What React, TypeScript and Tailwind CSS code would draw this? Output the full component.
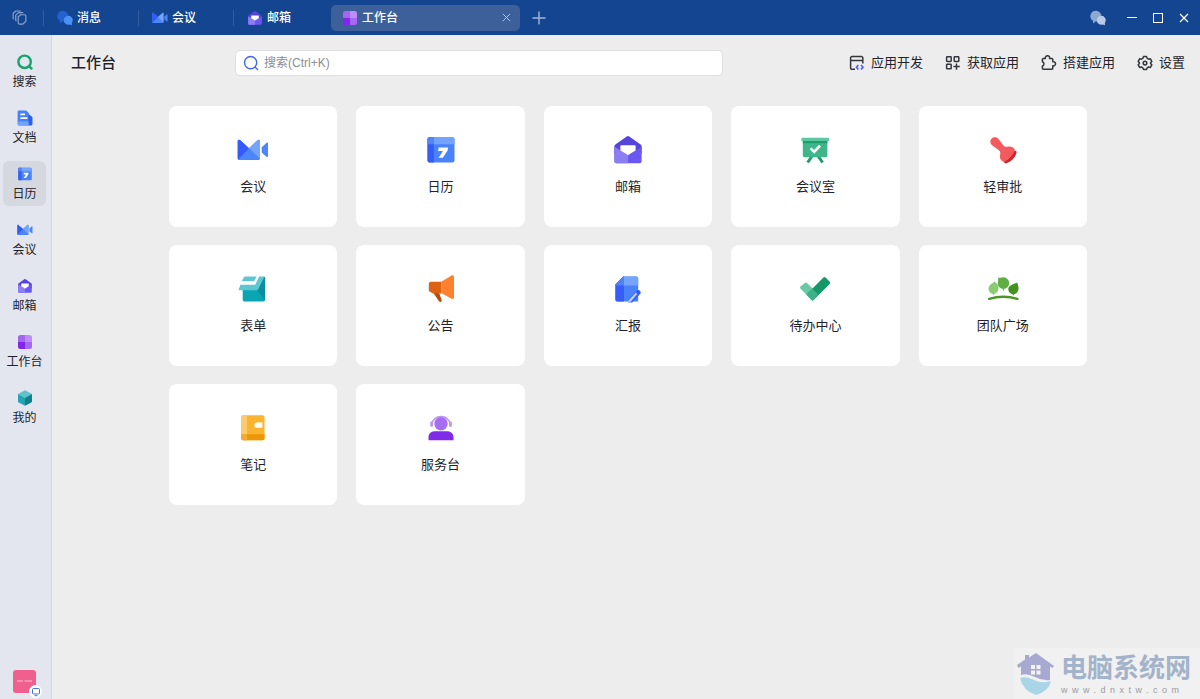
import { useState, type ReactNode } from 'react';
import { clsx } from 'clsx';

interface IconProps {
  className?: string;
}

interface Item {
  name: string;
  icon: (props: IconProps) => ReactNode;
}

/* ---------- App icons (32 x 32 grid) ---------- */

function MeetingIcon({ className }: IconProps) {
  return (
    <svg viewBox="0 0 32 32" className={className} aria-hidden="true">
      <path d="M.7 7.2C.7 5.7 2.2 5.2 3.4 6.3L12 14.2 20.3 6.3C21.5 5.2 23 5.7 23 7.2V24.4A1.6 1.6 0 0 1 21.4 26H2.3A1.6 1.6 0 0 1 .7 24.4Z" fill="#4d86fb" />
      <path d="M.7 7.2C.7 5.7 2.2 5.2 3.4 6.3L12 14.2 1.2 25.4.7 24.4Z" fill="#345bfa" />
      <path d="M12 14.2 20.3 6.3C21.5 5.2 23 5.7 23 7.2V24.6Z" fill="#75a4fc" />
      <path d="M24.7 13.2 29.4 9C30.2 8.3 31 8.6 31 9.6V22C31 23 30.2 23.4 29.4 22.7L24.7 18.6Z" fill="#4d86fb" />
    </svg>
  );
}

function CalendarIcon({ className }: IconProps) {
  return (
    <svg viewBox="0 0 32 32" className={className} aria-hidden="true">
      <rect x="2.5" y="3.3" width="27" height="25.2" rx="2" fill="#4a82fa" />
      <path d="M4.5 3.3H9V28.5H4.5A2 2 0 0 1 2.5 26.5V5.3A2 2 0 0 1 4.5 3.3Z" fill="#355df9" />
      <path d="M9 3.3H27.5A2 2 0 0 1 29.5 5.3V10.3H9Z" fill="#73a3fb" />
      <path d="M4.5 3.3H9V10.3H2.5V5.3A2 2 0 0 1 4.5 3.3Z" fill="#5484fa" />
      <path d="M13.8 13.6H23.2L22.6 16.4 17.8 23.8H13.6L18 17H13Z" fill="#fff" />
    </svg>
  );
}

function MailIcon({ className }: IconProps) {
  return (
    <svg viewBox="0 0 32 32" className={className} aria-hidden="true">
      <path d="M14.7 2.5A2.2 2.2 0 0 1 17.3 2.5L28.6 10.4A2.4 2.4 0 0 1 29.6 12.3V20H2.4V12.3A2.4 2.4 0 0 1 3.4 10.4Z" fill="#5645dc" />
      <path d="M2.4 12.8 16 21 29.6 12.8V27.3A2 2 0 0 1 27.6 29.3H4.4A2 2 0 0 1 2.4 27.3Z" fill="#6b57f2" />
      <path d="M2.4 12.8 16 21V29.3H4.4A2 2 0 0 1 2.4 27.3Z" fill="#8c7ef0" />
      <path d="M9.4 11.2H22.6A1 1 0 0 1 23.6 12.2V16.4L16 21 8.4 16.4V12.2A1 1 0 0 1 9.4 11.2Z" fill="#fff" />
    </svg>
  );
}

function RoomIcon({ className }: IconProps) {
  return (
    <svg viewBox="0 0 32 32" className={className} aria-hidden="true">
      <path d="M13.5 21.5 8.6 28.5M18.7 21.5 23.6 28.5" stroke="#1b9d6c" strokeWidth="3" fill="none" />
      <path d="M3.8 7H28.4V21.4A1.8 1.8 0 0 1 26.6 23.2H5.6A1.8 1.8 0 0 1 3.8 21.4Z" fill="#3fb68a" />
      <path d="M3.8 6.5H28.4V9.2H3.8Z" fill="#1b9d6c" />
      <rect x="2.4" y="3.8" width="27.6" height="3.2" rx=".6" fill="#5cc8a1" />
      <path d="M11.6 14.4 15.2 17.8 21 11.6" stroke="#fff" strokeWidth="2.6" fill="none" />
    </svg>
  );
}

function StampIcon({ className }: IconProps) {
  return (
    <svg viewBox="0 0 32 32" className={className} aria-hidden="true">
      <path d="M27.6 16.6C29 16.4 29.8 17.4 29.5 18.8 28.3 23.6 24 28 19.4 29.3 17.8 29.7 16.8 28.8 17.1 27.3Z" fill="#c9282f" />
      <path d="M4.6 4.6C6.7 2.5 9.8 2.7 11.6 5L16.4 11.5C17.6 13 19.2 12.9 21 12.6 24 12.1 26.3 13 27.9 15.4 26.9 20 22 26.2 16.6 27.7 13.3 26.5 12.4 23.4 13.2 20.4 13.7 18.6 13.2 17.2 11.6 15.9L5 11.2C2.9 9.6 2.8 6.4 4.6 4.6Z" fill="#f35a5e" />
    </svg>
  );
}

function FormIcon({ className }: IconProps) {
  return (
    <svg viewBox="0 0 32 32" className={className} aria-hidden="true">
      <path d="M5.7 16H28V26.8A1.8 1.8 0 0 1 26.2 28.6H7.5A1.8 1.8 0 0 1 5.7 26.8Z" fill="#0aa5b2" />
      <path d="M26.4 3.5A1.8 1.8 0 0 1 28.2 5.3V28L20.4 17.2Z" fill="#0b8f9e" />
      <path d="M8.6 3.5H19.6L17.2 8.1H4.8L6.8 4.4A2 2 0 0 1 8.6 3.5Z" fill="#5cc7d3" />
      <path d="M22.2 3.5H27.6L21.2 16A2.2 2.2 0 0 1 19.3 17.2H1.5L3.4 11.8H18.2Z" fill="#5cc7d3" />
    </svg>
  );
}

function NoticeIcon({ className }: IconProps) {
  return (
    <svg viewBox="0 0 32 32" className={className} aria-hidden="true">
      <path d="M7 18H13.4L16.6 26.8C17.2 28.9 15.4 29.8 14 28.3Z" fill="#b84c0c" />
      <path d="M5.8 8.8H16.4V20.4H8.2L4.5 18.6A2 2 0 0 1 3.8 17V10.8A2 2 0 0 1 5.8 8.8Z" fill="#dd6213" />
      <path d="M16.2 8.8 26.2 2.7C27.7 1.9 29 2.6 29 4.2V24C29 25.6 27.7 26.4 26.2 25.6L16.2 20Z" fill="#ff812d" />
    </svg>
  );
}

function ReportIcon({ className }: IconProps) {
  return (
    <svg viewBox="0 0 32 32" className={className} aria-hidden="true">
      <path d="M11.2 3.5H24.3A1.9 1.9 0 0 1 26.2 5.4V28.5H5.3A1.9 1.9 0 0 1 3.4 26.6V11.6Z" fill="#4a82fa" />
      <path d="M12 3.5V28.5H5.3A1.9 1.9 0 0 1 3.4 26.6V11.6L11.2 3.5Z" fill="#355df9" />
      <path d="M11.2 3.5H12V12.4H3.4V11.6Z" fill="#4f82fa" />
      <path d="M12 3.5H24.3A1.9 1.9 0 0 1 26.2 5.4V12.4H12Z" fill="#75a4fc" />
      <path d="M16.6 26.2 25.6 17 29 20 20.2 29.6H16.2Z" fill="#355df9" />
      <path d="M16.4 29.4V27.4L23.8 19.6 25.4 21 18 29.4Z" fill="#b3cdfd" />
      <path d="M25.2 17.8 26.4 17C27 16.7 28.8 18.2 28.6 19L27.6 20.6Z" fill="#355df9" />
    </svg>
  );
}

function TodoIcon({ className }: IconProps) {
  return (
    <svg viewBox="0 0 32 32" className={className} aria-hidden="true">
      <path d="M5.8 9.9A1.6 1.6 0 0 1 8 9.9L18.8 20.6 14.8 26.8A1.7 1.7 0 0 1 12.4 26.8L1.4 15.6A1.6 1.6 0 0 1 1.4 13.6Z" fill="#69caa8" />
      <path d="M24.4 4.6A1.6 1.6 0 0 1 26.6 4.6L30.7 8.8A1.6 1.6 0 0 1 30.7 11L14.8 26.8A1.7 1.7 0 0 1 12.4 26.8L7.8 21.2Z" fill="#149867" />
      <path d="M13.2 15.6 18.9 21.3 14.8 26.8A1.7 1.7 0 0 1 12.4 26.8L7.4 21.6Z" fill="#3fb188" />
    </svg>
  );
}

function TeamIcon({ className }: IconProps) {
  return (
    <svg viewBox="0 0 32 32" className={className} aria-hidden="true">
      <path d="M7.4 8.6C10.4 10.4 12 13 11.5 16 11 18.8 9.3 20.2 7.2 20.9L6.6 22.6 5.8 20.9C3.2 20.2 1.3 18 1.5 15.4 1.8 12.2 4.8 11 7.4 8.6Z" fill="#8bcb72" />
      <path d="M11.2 4.4C14.2 5.4 16 3.6 18.6 4.8 21.4 6 22.6 8.6 22 11.4 21.4 14 19.4 15.4 17.2 15.8L16.4 18.2 15.6 15.8C12.8 15.2 10.8 13.2 10.8 10.4 10.8 8.2 11.6 6.6 11.2 4.4Z" fill="#5fae43" />
      <path d="M30.2 9.4C30.8 12 32 13.6 31.4 16.6 30.8 19.4 29 20.6 27 21.2L26.4 22.8 25.6 21.2C23 20.6 21.2 18.8 21.3 16 21.4 12.4 25.6 11.2 30.2 9.4Z" fill="#43911f" />
      <path d="M2.2 25.8Q16.3 21.8 30.4 25.8" stroke="#4c9626" strokeWidth="2.4" strokeLinecap="round" fill="none" />
    </svg>
  );
}

function NoteIcon({ className }: IconProps) {
  return (
    <svg viewBox="0 0 32 32" className={className} aria-hidden="true">
      <rect x="4.3" y="3.3" width="23.2" height="25" rx="2" fill="#fbb42f" />
      <path d="M4.3 22.2H27.5V26.3A2 2 0 0 1 25.5 28.3H6.3A2 2 0 0 1 4.3 26.3Z" fill="#ec9706" />
      <path d="M6.3 3.3H10V22.2H4.3V5.3A2 2 0 0 1 6.3 3.3Z" fill="#fbca6c" />
      <path d="M4.3 22.2H10V28.3H6.3A2 2 0 0 1 4.3 26.3Z" fill="#f3aa30" />
      <path d="M20 10.6H25.4V15.8H20A2.6 2.6 0 0 1 20 10.6Z" fill="#fff" />
    </svg>
  );
}

function ServiceIcon({ className }: IconProps) {
  return (
    <svg viewBox="0 0 32 32" className={className} aria-hidden="true">
      <path d="M6.8 12.4A9.3 9.3 0 0 1 25.2 12.4" stroke="#bd93f4" strokeWidth="1.6" fill="none" />
      <rect x="5.2" y="9.4" width="2.8" height="5.4" rx="1.2" fill="#bd93f4" />
      <rect x="24" y="9.4" width="2.8" height="5.4" rx="1.2" fill="#bd93f4" />
      <circle cx="16" cy="11.8" r="6.7" fill="#a66df2" />
      <path d="M9.1 19.3H22.9A5.6 5.6 0 0 1 28.5 24.9V28.3H3.5V24.9A5.6 5.6 0 0 1 9.1 19.3Z" fill="#7f2be8" />
    </svg>
  );
}

/* ---------- Navigation icons (16 x 16 grid) ---------- */

function SearchIcon({ className }: IconProps) {
  return (
    <svg viewBox="0 0 16 16" className={className} fill="none" stroke="currentColor" aria-hidden="true">
      <circle cx="7.6" cy="7.6" r="6.1" />
      <path d="M11.8 11.8 15 15" />
    </svg>
  );
}

function SideSearchIcon({ className }: IconProps) {
  return (
    <svg viewBox="0 0 16 16" className={className} fill="none" stroke="#16a36c" strokeWidth="2.4" aria-hidden="true">
      <circle cx="7.6" cy="7.8" r="6.2" />
      <path d="M11.6 11.8 15.2 15.2" />
    </svg>
  );
}

function DocIcon({ className }: IconProps) {
  return (
    <svg viewBox="0 0 16 16" className={className} aria-hidden="true">
      <path d="M2 .5H9.2L12 3.2V15.5H2A1.4 1.4 0 0 1 .6 14.1V1.9A1.4 1.4 0 0 1 2 .5Z" fill="#4583f8" />
      <path d="M12 4.6 14.8 6.6A1.6 1.6 0 0 1 15.5 8V14A1.5 1.5 0 0 1 14 15.5H11.4V6Z" fill="#2f5fe8" />
      <path d="M.6 11.4H11.6V15.5H2A1.4 1.4 0 0 1 .6 14.1Z" fill="#72a4fb" />
      <path d="M3.4 4.4H8M3.4 8.2H10.4" stroke="#fff" strokeWidth="1.7" />
    </svg>
  );
}

function BenchIcon({ className }: IconProps) {
  return (
    <svg viewBox="0 0 16 16" className={className} aria-hidden="true">
      <path d="M3.5 1H8V8H1V3.5A2.5 2.5 0 0 1 3.5 1Z" fill="#a565ee" />
      <path d="M8 1H12.5A2.5 2.5 0 0 1 15 3.5V8H8Z" fill="#bd8df5" />
      <path d="M1 8H8V15H3.5A2.5 2.5 0 0 1 1 12.5Z" fill="#8226ee" />
      <path d="M8 8H15V12.5A2.5 2.5 0 0 1 12.5 15H8Z" fill="#a468f2" />
    </svg>
  );
}

function CubeIcon({ className }: IconProps) {
  return (
    <svg viewBox="0 0 16 16" className={className} aria-hidden="true">
      <path d="M8 .2 15 4 8 7.8 1 4Z" fill="#5cc3cc" />
      <path d="M1 4 8 7.8V15.8L1.7 12.4A1.2 1.2 0 0 1 1 11.3Z" fill="#23a5b0" />
      <path d="M15 4 8 7.8V15.8L14.3 12.4A1.2 1.2 0 0 0 15 11.3Z" fill="#0f7f8c" />
    </svg>
  );
}

function BubblesIcon({ className, back, front }: IconProps & { back: string; front: string }) {
  return (
    <svg viewBox="0 0 16 16" className={className} aria-hidden="true">
      <path d="M6 .8A5.6 5.4 0 1 1 5.6 11.6L3 13.4 3 10.8A5.6 5.4 0 0 1 6 .8Z" fill={back} />
      <path d="M11.2 5.8A4.5 4.5 0 0 1 14.8 13L15 15.2 12.6 14.6A4.5 4.5 0 1 1 11.2 5.8Z" fill={front} />
    </svg>
  );
}

function MessageIcon({ className }: IconProps) {
  return <BubblesIcon className={className} back="#2460cf" front="#4a90f7" />;
}

function StackIcon({ className }: IconProps) {
  return (
    <svg viewBox="0 0 16 16" className={className} fill="none" stroke="currentColor" strokeWidth="1.2" strokeLinejoin="round" aria-hidden="true">
      <path d="M6.6 7.2 9.4 5H13.4A1.4 1.4 0 0 1 14.8 6.4V12L11.6 15H8A1.4 1.4 0 0 1 6.6 13.6Z" />
      <path d="M4.6 12 4 10.8V5.4L7 2.8H12M1.8 9.8 1.2 8.8V3.4L4.2 1H9.4" />
    </svg>
  );
}

function DevIcon({ className }: IconProps) {
  return (
    <svg viewBox="0 0 16 16" className={className} fill="none" aria-hidden="true">
      <path d="M6 14.3H3A1.4 1.4 0 0 1 1.6 12.9V3A1.4 1.4 0 0 1 3 1.6H12.4A1.4 1.4 0 0 1 13.8 3V8.4M1.6 5.4H13.8" stroke="#33363b" strokeWidth="1.5" />
      <path d="M9.4 10 7.4 12.2 9.4 14.4M12 10 14 12.2 12 14.4" stroke="#4b5df5" strokeWidth="1.6" />
    </svg>
  );
}

function GetAppIcon({ className }: IconProps) {
  return (
    <svg viewBox="0 0 16 16" className={className} fill="none" stroke="#33363b" strokeWidth="1.5" aria-hidden="true">
      <rect x="1.6" y="1.8" width="4.6" height="4.6" rx=".6" />
      <rect x="9.2" y="1.8" width="4.6" height="4.6" rx=".6" />
      <rect x="1.6" y="9.2" width="4.6" height="4.6" rx=".6" />
      <path d="M11.5 8.4V14.8M8.4 11.5H14.8" />
    </svg>
  );
}

function BuildIcon({ className }: IconProps) {
  return (
    <svg viewBox="0 0 16 16" className={className} fill="none" stroke="#33363b" strokeWidth="1.5" strokeLinejoin="round" aria-hidden="true">
      <path d="M2.4 3.6H4.4A2.2 2.2 0 1 1 8.6 3.6H10.8A1 1 0 0 1 11.8 4.6V6.8A2.1 2.1 0 1 1 11.8 10.8V13.2A1 1 0 0 1 10.8 14.2H2.4A1 1 0 0 1 1.4 13.2V11A2.2 2.2 0 0 0 1.4 6.8V4.6A1 1 0 0 1 2.4 3.6Z" />
    </svg>
  );
}

function GearIcon({ className }: IconProps) {
  return (
    <svg viewBox="0 0 16 16" className={className} fill="none" stroke="#33363b" strokeWidth="1.5" strokeLinejoin="round" aria-hidden="true">
      <path d="M6.5 1.5H9.5L10.2 3.4 11.6 4.2 13.4 3.8 14.8 6.4 13.6 7.8V8.4L14.8 9.8 13.4 12.4 11.6 12 10.2 12.8 9.5 14.6H6.5L5.8 12.8 4.4 12 2.6 12.4 1.2 9.8 2.4 8.4V7.8L1.2 6.4 2.6 3.8 4.4 4.2 5.8 3.4Z" />
      <circle cx="8" cy="8.1" r="1.8" />
    </svg>
  );
}

const tabs: Item[] = [
  { name: '消息', icon: MessageIcon },
  { name: '会议', icon: MeetingIcon },
  { name: '邮箱', icon: MailIcon },
];

const sideItems: Item[] = [
  { name: '搜索', icon: SideSearchIcon },
  { name: '文档', icon: DocIcon },
  { name: '日历', icon: CalendarIcon },
  { name: '会议', icon: MeetingIcon },
  { name: '邮箱', icon: MailIcon },
  { name: '工作台', icon: BenchIcon },
  { name: '我的', icon: CubeIcon },
];

const actions: Item[] = [
  { name: '应用开发', icon: DevIcon },
  { name: '获取应用', icon: GetAppIcon },
  { name: '搭建应用', icon: BuildIcon },
  { name: '设置', icon: GearIcon },
];

const apps: Item[] = [
  { name: '会议', icon: MeetingIcon },
  { name: '日历', icon: CalendarIcon },
  { name: '邮箱', icon: MailIcon },
  { name: '会议室', icon: RoomIcon },
  { name: '轻审批', icon: StampIcon },
  { name: '表单', icon: FormIcon },
  { name: '公告', icon: NoticeIcon },
  { name: '汇报', icon: ReportIcon },
  { name: '待办中心', icon: TodoIcon },
  { name: '团队广场', icon: TeamIcon },
  { name: '笔记', icon: NoteIcon },
  { name: '服务台', icon: ServiceIcon },
];

function TitleBar() {
  return (
    <header className="flex h-[35px] items-center bg-[#144591] text-xs font-medium text-white">
      <button aria-label="窗口列表" className="ml-3 mr-4 text-[#8ba6d2]">
        <StackIcon className="size-[15px]" />
      </button>

      {tabs.map((tab) => (
        <button key={tab.name} className="flex h-4 w-[95px] items-center gap-1 border-l border-[#335d9f] pl-[13px]">
          <tab.icon className="size-4" />
          {tab.name}
        </button>
      ))}

      <div className="ml-[3px] flex h-[26px] w-[189px] items-center rounded-[5px] bg-[#3d609b] pl-[11px] pr-2">
        <button className="flex flex-1 items-center gap-1">
          <BenchIcon className="size-4" />
          工作台
        </button>
        <button aria-label="关闭标签" className="p-px text-[#c3cfe3]">
          <svg viewBox="0 0 10 10" className="size-[9px]" stroke="currentColor" aria-hidden="true">
            <path d="M1 1 9 9M9 1 1 9" />
          </svg>
        </button>
      </div>
      <button aria-label="新建标签" className="ml-3 text-[#a3b7d9]">
        <svg viewBox="0 0 14 14" className="size-3.5" stroke="currentColor" strokeWidth="1.4" aria-hidden="true">
          <path d="M7 .5V13.5M.5 7H13.5" />
        </svg>
      </button>

      <div className="ml-auto flex items-center gap-3.5 pr-2.5">
        <button aria-label="消息" className="mr-1.5">
          <BubblesIcon className="size-4" back="#8fa8d1" front="#b9cbe8" />
        </button>
        <button aria-label="最小化">
          <svg viewBox="0 0 12 12" className="size-3" stroke="#fff" aria-hidden="true">
            <path d="M1 5.5H11" />
          </svg>
        </button>
        <button aria-label="最大化">
          <svg viewBox="0 0 12 12" className="size-3" stroke="#fff" fill="none" aria-hidden="true">
            <rect x="1.5" y="1.5" width="9" height="9" />
          </svg>
        </button>
        <button aria-label="关闭">
          <svg viewBox="0 0 12 12" className="size-3" stroke="#fff" strokeWidth="1.2" aria-hidden="true">
            <path d="M2 2 10 10M10 2 2 10" />
          </svg>
        </button>
      </div>
    </header>
  );
}

function Sidebar() {
  const [current, setCurrent] = useState('日历');

  return (
    <nav className="flex w-[52px] shrink-0 flex-col border-r border-[#d6d9e0] bg-[#e3e6ee] pl-[3px] pr-[5px] pt-3.5">
      <div className="flex flex-col gap-[11px]">
        {sideItems.map((item) => (
          <button
            key={item.name}
            onClick={() => setCurrent(item.name)}
            className={clsx(
              'flex h-[45px] flex-col items-center gap-1 rounded-md pt-[5px] text-xs leading-4 text-[#1f2329]',
              item.name === current && 'bg-[#d6d8e0]'
            )}
          >
            <item.icon className="size-4" />
            <span className="whitespace-nowrap">{item.name}</span>
          </button>
        ))}
      </div>

      {/* Avatar with device badge */}
      <div className="relative mb-1.5 ml-2.5 mt-auto size-[23px] rounded-[3px] bg-[#f0608f]">
        <svg viewBox="0 0 23 23" className="size-full" aria-hidden="true">
          <path d="M4 11H10M11.5 11H19" stroke="#fbc3d6" />
        </svg>
        <span className="absolute -bottom-[5px] -right-1.5 flex size-[13px] items-center justify-center rounded-full bg-white">
          <svg viewBox="0 0 10 10" className="size-2.5" fill="none" stroke="#3d74d6" aria-hidden="true">
            <rect x="1.5" y="1.5" width="7" height="5.5" rx="1" />
            <path d="M3.5 8.7H6.5" />
          </svg>
        </span>
      </div>
    </nav>
  );
}

function Watermark() {
  return (
    <div className="pointer-events-none absolute bottom-0 right-0 flex h-[51px] w-[187px] items-center gap-1.5 bg-[#f1f1f1] pl-1">
      <svg viewBox="0 0 38 44" className="h-11 w-[38px] shrink-0" aria-hidden="true">
        <path d="M19 1 37 14 35.5 16 33 14.5V28Q26 29 18 25 10 21 4 23V14.5L1.5 16 0 13 8 7.5V3H12V5.4Z" fill="#a7a9d0" />
        <path d="M14 13H18V17H14ZM19.5 13H23.5V17H19.5ZM14 18.5H18V22.5H14ZM19.5 18.5H23.5V22.5H19.5Z" fill="#f4f4f8" />
        <path d="M3 26Q9 24 17 28 25 32 34 29 32 39 19 43 6 39 3 26Z" fill="#a9d5e6" />
      </svg>
      <div className="flex flex-col">
        <span className="text-[26px] font-bold leading-8 text-[#a3b3c9]">电脑系统网</span>
        <span className="text-[9px] leading-3 tracking-[0.5em] text-[#9a9ca3]">www.dnxtw.com</span>
      </div>
    </div>
  );
}

export default function App() {
  const [keyword, setKeyword] = useState('');

  return (
    <div className="relative flex min-h-screen flex-col bg-[#ededed] font-['Liberation_Sans','Noto_Sans_CJK_SC',sans-serif]">
      <TitleBar />

      <div className="flex flex-1">
        <Sidebar />

        <main className="flex-1">
          {/* Header */}
          <div className="flex items-center pl-[19px] pr-[15px] pt-[15px]">
            <h1 className="w-[164px] shrink-0 text-[15px] font-medium leading-6 text-[#1f2329]">工作台</h1>
            <label className="flex h-[26px] max-w-[488px] flex-1 items-center gap-[5px] rounded-[5px] border border-[#dedfe1] bg-white pl-[7px] pr-2">
              <SearchIcon className="size-4 stroke-[1.4px] text-[#4268ee]" />
              <input
                type="text"
                aria-label="搜索"
                placeholder="搜索(Ctrl+K)"
                className="min-w-0 flex-1 text-xs text-[#1f2329] outline-none placeholder:text-[#8b8e94]"
                value={keyword}
                onChange={(e) => setKeyword(e.target.value)}
              />
            </label>
            <div className="ml-auto flex items-center gap-[22px]">
              {actions.map((action) => (
                <button key={action.name} className="flex items-center gap-1.5 whitespace-nowrap text-[13px] leading-5 text-[#1f2329]">
                  <action.icon className="size-4" />
                  {action.name}
                </button>
              ))}
            </div>
          </div>

          {/* Apps */}
          <div className="grid grid-cols-5 gap-x-[19px] gap-y-[18px] pb-8 pl-[117px] pr-[113px] pt-[30px]">
            {apps.map((app) => (
              <button
                key={app.name}
                className="flex h-[121px] flex-col items-center gap-[11px] rounded-lg bg-white pt-7 text-[13px] leading-5 text-[#1f2329]"
              >
                <app.icon className="size-8" />
                {app.name}
              </button>
            ))}
          </div>
        </main>
      </div>

      <Watermark />
    </div>
  );
}
